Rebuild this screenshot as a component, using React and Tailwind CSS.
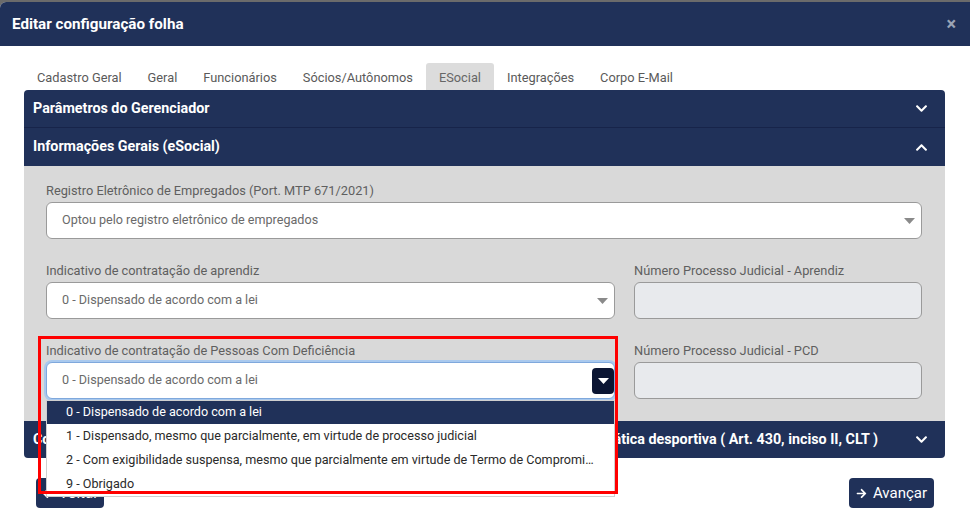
import React from "react";
import { FaChevronDown, FaChevronUp, FaArrowRight, FaArrowLeft } from "react-icons/fa";

const NAVY = "bg-[#203159]";

function Caret({ className = "" }) {
  return (
    <svg width="11" height="6" viewBox="0 0 11 6" className={className}>
      <path d="M0 0 L11 0 L5.5 6 Z" fill="currentColor" />
    </svg>
  );
}

function Label({ children }) {
  return <div className="text-[12.8px] leading-4 text-[#5f5f5f] mb-[3px] h-4 whitespace-nowrap">{children}</div>;
}

function Select({ value }) {
  return (
    <div className="h-[37px] bg-white border border-[#9a9a9a] rounded-[6px] flex items-center pl-[15px] pr-[6px] justify-between">
      <span className="text-[12.6px] text-[#6a6a6a]">{value}</span>
      <Caret className="text-[#8a8a8a]" />
    </div>
  );
}

function ReadOnly() {
  return <div className="h-[37px] bg-[#e8eaed] border border-[#9a9a9a] rounded-[6px]" />;
}

export default function App() {
  const tabs = ["Cadastro Geral", "Geral", "Funcionários", "Sócios/Autônomos", "ESocial", "Integrações", "Corpo E-Mail"];
  return (
    <div className="w-[970px] h-[528px] bg-[#6b6b6b] pt-[2px] overflow-hidden" style={{ fontFamily: "Roboto, 'Liberation Sans', sans-serif" }}>
      <div className="relative bg-white h-[526px] rounded-tl-[6px] overflow-hidden">
        {/* header */}
        <div className={`${NAVY} h-[44px] flex items-center justify-between pl-[12px] pr-[14px]`}>
          <span className="text-white font-bold text-[15.2px]">Editar configuração folha</span>
          <span className="text-[#9aa3b5] font-bold text-[18px] leading-none">×</span>
        </div>

        {/* tabs */}
        <div className="flex pl-[24px] pt-[17px] h-[44px]">
          {tabs.map((t) => (
            <div
              key={t}
              className={`h-[27px] px-[13px] pt-[2px] flex items-center text-[12.8px] rounded-t-[3px] ${t === "ESocial" ? "bg-[#dcdcdc] text-[#666]" : "text-[#5a5a5a]"}`}
            >
              {t}
            </div>
          ))}
        </div>

        {/* accordion */}
        <div className="mx-[24px] w-[921px]">
          <div className={`${NAVY} h-[38px] rounded-t-[4px] flex items-center justify-between pl-[9px] pr-[17px] border-b border-[#17244a]`}>
            <span className="text-white font-bold text-[14.3px]">Parâmetros do Gerenciador</span>
            <FaChevronDown className="text-white" size={13} />
          </div>
          <div className={`${NAVY} h-[38px] flex items-center justify-between pl-[9px] pr-[17px]`}>
            <span className="text-white font-bold text-[14.3px]">Informações Gerais (eSocial)</span>
            <FaChevronUp className="text-white" size={13} />
          </div>
          <div className="bg-[#d9d9d9] pt-[17px] pb-[22px] pl-[22px] pr-[23px]">
            <Label>Registro Eletrônico de Empregados (Port. MTP 671/2021)</Label>
            <Select value="Optou pelo registro eletrônico de empregados" />

            <div className="grid grid-cols-[569px_288px] gap-x-[19px] mt-[24px]">
              <div>
                <Label>Indicativo de contratação de aprendiz</Label>
                <Select value="0 - Dispensado de acordo com a lei" />
              </div>
              <div>
                <Label>Número Processo Judicial - Aprendiz</Label>
                <ReadOnly />
              </div>
            </div>

            <div className="grid grid-cols-[569px_288px] gap-x-[19px] mt-[24px]">
              <div>
                <Label>Indicativo de contratação de Pessoas Com Deficiência</Label>
                <div className="h-[37px] bg-white border border-[#7fa8dc] rounded-[6px] flex items-center pl-[15px] pr-0 justify-between shadow-[0_0_0_2px_#a9c9ee]">
                  <span className="text-[12.6px] text-[#6a6a6a]">0 - Dispensado de acordo com a lei</span>
                  <div className="w-[22px] h-[26px] bg-[#0b1533] rounded-[4px] flex items-center justify-center">
                    <Caret className="text-white" />
                  </div>
                </div>
              </div>
              <div>
                <Label>Número Processo Judicial - PCD</Label>
                <ReadOnly />
              </div>
            </div>
          </div>
          <div className={`${NAVY} h-[37px] rounded-b-[4px] flex items-center justify-between pl-[9px] pr-[17px] overflow-hidden`}>
            <span className="text-white font-bold text-[14.3px] whitespace-nowrap">Contratação de aprendiz por intermédio de entidade educativa sem fins lucrativos ou de prática desportiva ( Art. 430, inciso II, CLT )</span>
            <FaChevronDown className="text-white shrink-0" size={13} />
          </div>
        </div>

        {/* footer buttons */}
        <div className="flex justify-between pl-[36px] pr-[36px] mt-[20px]">
          <button className={`${NAVY} h-[30px] w-[68px] rounded-[4px] text-white text-[15px] flex items-center justify-center gap-[6px]`}>
            <FaArrowLeft size={11} /> Voltar
          </button>
          <button className={`${NAVY} h-[30px] w-[85px] rounded-[4px] text-white text-[15px] flex items-center justify-center gap-[6px]`}>
            <FaArrowRight size={11} /> Avançar
          </button>
        </div>

        {/* dropdown list */}
        <div className="absolute left-[46px] top-[398px] w-[569px] bg-white border border-[#cfcfcf] text-[12.6px] text-[#2a2a2a]">
          <div className={`${NAVY} text-white h-[23px] flex items-center pl-[19px]`}>0 - Dispensado de acordo com a lei</div>
          <div className="h-[24px] flex items-center pl-[19px]">1 - Dispensado, mesmo que parcialmente, em virtude de processo judicial</div>
          <div className="h-[24px] flex items-center pl-[19px] pr-[20px]">
            <span className="truncate">2 - Com exigibilidade suspensa, mesmo que parcialmente em virtude de Termo de Compromisso de Ajustamento de Conduta</span>
          </div>
          <div className="h-[24px] flex items-center pl-[19px]">9 - Obrigado</div>
        </div>

        {/* red annotation */}
        <div className="absolute left-[38px] top-[334px] w-[580px] h-[158px] border-[3px] border-[#ff0000] pointer-events-none" />
      </div>
    </div>
  );
}
